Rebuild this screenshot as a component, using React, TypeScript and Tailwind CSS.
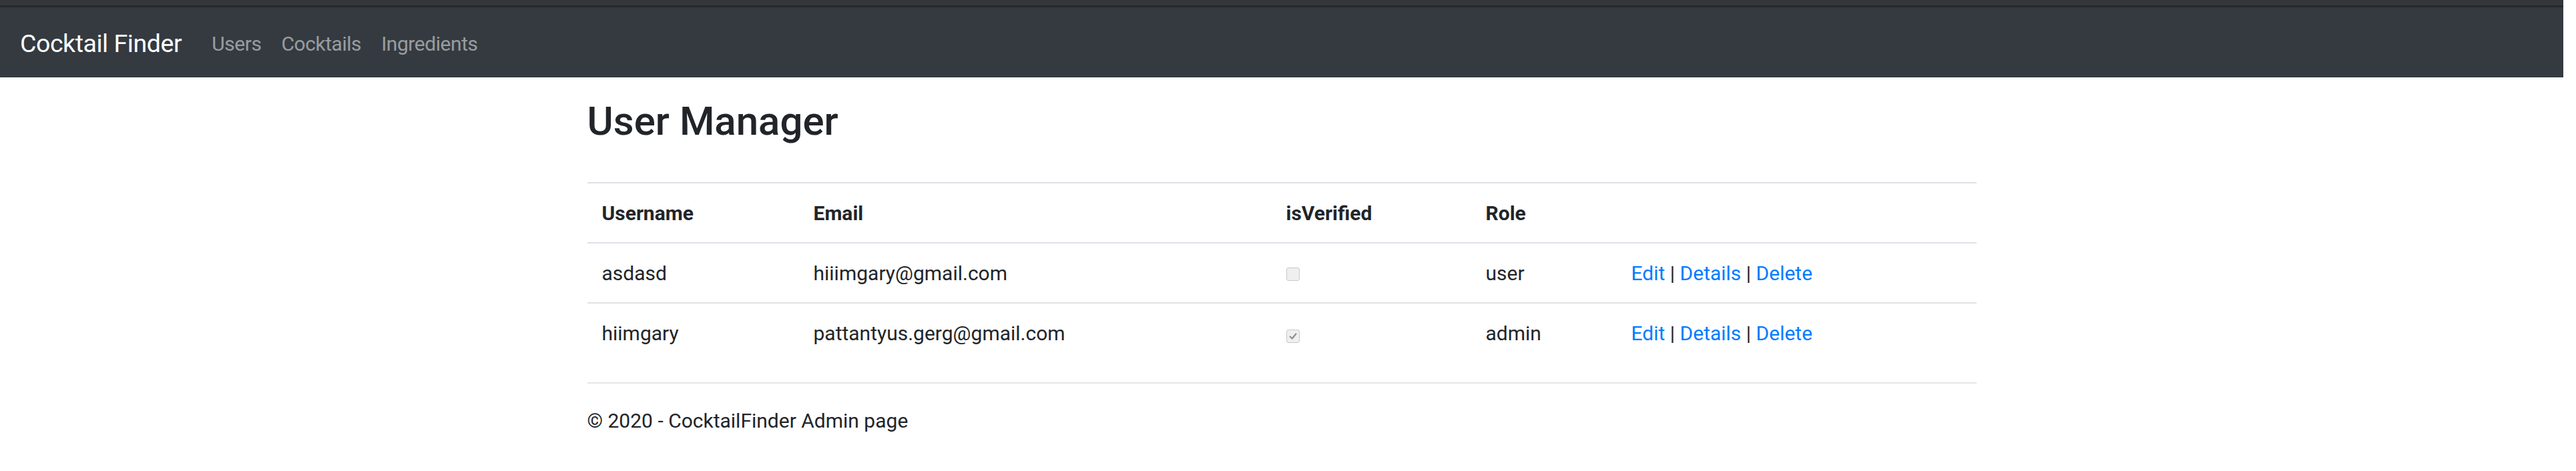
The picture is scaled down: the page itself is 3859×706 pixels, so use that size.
import React from "react"

type User = {
	username: string
	email: string
	verified: boolean
	role: string
}

const users: User[] = [
	{ username: "asdasd", email: "hiiimgary@gmail.com", verified: false, role: "user" },
	{ username: "hiimgary", email: "pattantyus.gerg@gmail.com", verified: true, role: "admin" },
]

const Checkbox = ({ checked }: { checked: boolean }) => (
	<span className="inline-flex h-[20px] w-[20px] items-center justify-center rounded-[3px] border border-[#c9c9c9] bg-[#efefef]">
		{checked ? (
			<svg viewBox="0 0 16 16" className="h-[14px] w-[14px]">
				<path d="M3 8.5 L6.5 12 L13 4" fill="none" stroke="#8f8f8f" strokeWidth="2.6" strokeLinecap="round" strokeLinejoin="round" />
			</svg>
		) : null}
	</span>
)

const cols = ["w-[317px]", "w-[708px]", "w-[299px]", "w-[218px]", "flex-1"]

const Row = ({ children, bold }: { children: React.ReactNode[]; bold?: boolean }) => (
	<div className={`flex h-[90px] border-t-2 border-[#dee2e6] ${bold ? "font-bold" : ""}`}>
		{children.map((c, i) => (
			<div key={i} className={`${cols[i]} shrink-0 px-[22px] pt-[22px] leading-[45px]`}>
				{c}
			</div>
		))}
	</div>
)

export default function App() {
	return (
		<div className="min-h-screen w-[3859px] bg-white font-['Roboto','Segoe_UI',sans-serif] text-[30px] text-[#212529]">
			<div className="w-[3840px]">
				<div className="h-[8px] bg-[#33373a]" />
				<div className="h-[3px] bg-[#25292c]" />
				<nav className="flex h-[105px] items-center bg-[#343a40] px-[30px] pt-[4px]">
					<a className="mr-[30px] text-[37.5px] tracking-[-0.012em] text-white">Cocktail Finder</a>
					<a className="px-[15px] tracking-[-0.015em] text-white/50">Users</a>
					<a className="px-[15px] tracking-[-0.015em] text-white/50">Cocktails</a>
					<a className="px-[15px] tracking-[-0.015em] text-white/50">Ingredients</a>
				</nav>

				<main className="mx-auto w-[2081px] pt-[30px]">
					<h2 className="mb-[55px] text-[60px] font-medium leading-[72px]">User Manager</h2>

					<div className="mb-[30px]">
						<Row bold>
							{["Username", "Email", "isVerified", "Role", ""]}
						</Row>
						{users.map((u) => (
							<Row key={u.username}>
								{[
									u.username,
									u.email,
									<div className="pt-[9px] leading-none">
										<Checkbox checked={u.verified} />
									</div>,
									u.role,
									<span>
										<a className="text-[#007bff]">Edit</a> | <a className="text-[#007bff]">Details</a> |{" "}
										<a className="text-[#007bff]">Delete</a>
									</span>,
								]}
							</Row>
						))}
					</div>

					<footer className="border-t-2 border-[#e5e5e5] leading-[112px] whitespace-nowrap">
						© 2020 - CocktailFinder Admin page
					</footer>
				</main>
			</div>
		</div>
	)
}
